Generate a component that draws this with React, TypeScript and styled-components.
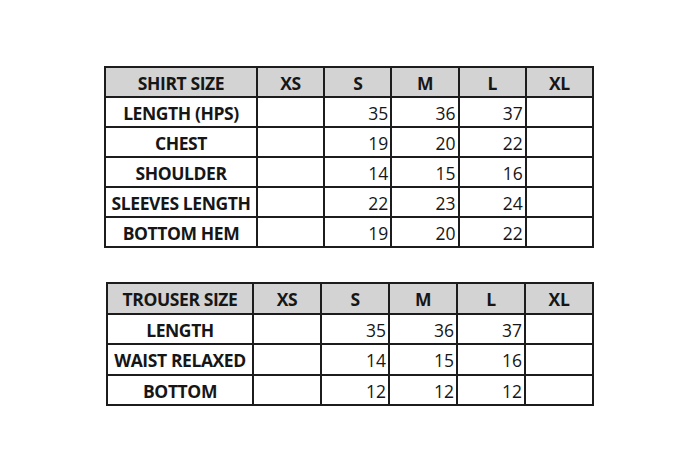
import React from "react"
import styled, { createGlobalStyle } from "styled-components"

const GlobalStyle = createGlobalStyle`
  html, body {
    margin: 0;
    padding: 0;
    background: #ffffff;
  }
`

interface ChartRow {
  label: string
  values: (number | null)[]
}

interface ChartData {
  title: string
  firstCol: number
  rowHeight: number
  rows: ChartRow[]
}

const SIZES = ["XS", "S", "M", "L", "XL"]

const shirt: ChartData = {
  title: "SHIRT SIZE",
  firstCol: 152,
  rowHeight: 30,
  rows: [
    { label: "LENGTH (HPS)", values: [null, 35, 36, 37, null] },
    { label: "CHEST", values: [null, 19, 20, 22, null] },
    { label: "SHOULDER", values: [null, 14, 15, 16, null] },
    { label: "SLEEVES LENGTH", values: [null, 22, 23, 24, null] },
    { label: "BOTTOM HEM", values: [null, 19, 20, 22, null] },
  ],
}

const trouser: ChartData = {
  title: "TROUSER SIZE",
  firstCol: 146,
  rowHeight: 30.5,
  rows: [
    { label: "LENGTH", values: [null, 35, 36, 37, null] },
    { label: "WAIST RELAXED", values: [null, 14, 15, 16, null] },
    { label: "BOTTOM", values: [null, 12, 12, 12, null] },
  ],
}

const SizeTable: React.FC<{ data: ChartData; offset: number }> = ({ data, offset }) => (
  <Table $offset={offset}>
    <colgroup>
      <col style={{ width: data.firstCol }} />
      {SIZES.map(s => (
        <col key={s} />
      ))}
    </colgroup>
    <thead>
      <tr>
        <HeadCell $h={data.rowHeight}>{data.title}</HeadCell>
        {SIZES.map(s => (
          <HeadCell key={s} $h={data.rowHeight}>
            {s}
          </HeadCell>
        ))}
      </tr>
    </thead>
    <tbody>
      {data.rows.map(row => (
        <tr key={row.label}>
          <LabelCell $h={data.rowHeight}>{row.label}</LabelCell>
          {row.values.map((v, i) => (
            <ValueCell key={i} $h={data.rowHeight}>
              {v ?? ""}
            </ValueCell>
          ))}
        </tr>
      ))}
    </tbody>
  </Table>
)

export default function App() {
  return (
    <Page>
      <GlobalStyle />
      <SizeTable data={shirt} offset={105} />
      <SizeTable data={trouser} offset={107} />
    </Page>
  )
}

const Page = styled.div`
  width: 700px;
  height: 467px;
  display: flex;
  flex-direction: column;
  gap: 34px;
  padding-top: 66px;
  box-sizing: border-box;
  font-family: "Open Sans", "Liberation Sans", sans-serif;
  color: #161616;
`

const Table = styled.table<{ $offset: number }>`
  margin-left: ${p => p.$offset - 1}px;
  width: ${p => 594 - p.$offset + 1}px;
  border-collapse: collapse;
  table-layout: fixed;
`

const Cell = styled.td<{ $h: number }>`
  height: ${p => p.$h}px;
  border: 2px solid #1c1c1c;
  padding: 3px 3px 0;
  box-sizing: border-box;
  line-height: 1;
  white-space: nowrap;
`

const HeadCell = styled(Cell).attrs({ as: "th" })`
  background: #d3d3d3;
  font-weight: 700;
  font-size: 17.5px;
  text-align: center;
  letter-spacing: -0.4px;
`

const LabelCell = styled(Cell)`
  font-weight: 700;
  font-size: 17.5px;
  text-align: center;
  letter-spacing: -0.4px;
`

const ValueCell = styled(Cell)`
  font-size: 17.5px;
  text-align: right;
  padding-right: 2px;
`
